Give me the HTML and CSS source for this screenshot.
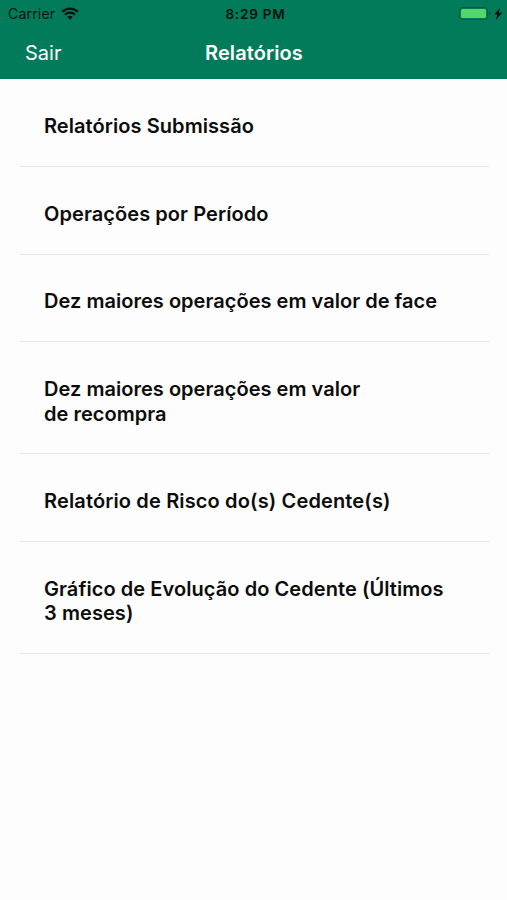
FILE: index.html
```html
<!DOCTYPE html>
<html lang="pt-BR">
<head>
<meta charset="UTF-8">
<meta name="viewport" content="width=device-width, initial-scale=1.0">
<title>Relatórios</title>
<link rel="stylesheet" href="styles.css">
</head>
<body>
  <header class="header">
    <div class="status">
      <div class="carrier">
        <span>Carrier</span>
        <svg class="wifi" width="18" height="13" viewBox="0 0 18 13">
          <path d="M1.2 4.9a11 11 0 0 1 15.6 0M4 7.8a7 7 0 0 1 10 0" fill="none" stroke="#06120d" stroke-width="2.2"/>
          <path d="M9 12.8l-2.7-2.7a3.9 3.9 0 0 1 5.4 0z" fill="#06120d"/>
        </svg>
      </div>
      <span class="time">8:29 PM</span>
      <div class="power">
        <svg width="44" height="14" viewBox="0 0 44 14">
          <rect x="0.5" y="0.5" width="28" height="12" rx="3" fill="none" stroke="#0b5841" stroke-width="1"/>
          <rect x="2" y="2" width="25" height="9" rx="1.5" fill="#53d769"/>
          <path d="M30 4.5v4q1.6-.6 1.6-2t-1.6-2z" fill="#0b5841"/>
          <path d="M41 .8l-5.700 6.700h3l-1.400 5.300 6.300-7h-3.400z" fill="#06120d"/>
        </svg>
      </div>
    </div>
    <nav class="navbar">
      <a class="exit">Sair</a>
      <h1 class="title">Relatórios</h1>
    </nav>
  </header>
  <ul class="reports">
    <li>Relatórios Submissão</li>
    <li>Operações por Período</li>
    <li class="tight">Dez maiores operações em valor de face</li>
    <li class="tight">Dez maiores operações em valor<br>de recompra</li>
    <li class="wide">Relatório de Risco do(s) Cedente(s)</li>
    <li>Gráfico de Evolução do Cedente (Últimos<br>3 meses)</li>
  </ul>
</body>
</html>
```
FILE: styles.css
```css
* {
  box-sizing: border-box;
}
body {
  margin: 0;
  min-height: 900px;
  background-color: #fdfdfd;
  font-family: Inter, "Liberation Sans", sans-serif;
  color: #0c0c0c;
}

/* Green top area */
.header {
  height: 79px;
  background-color: #027b5b;
}
.status {
  display: grid;
  grid-template-columns: 1fr auto 1fr;
  align-items: center;
  height: 27px;
  padding: 0 4px 0 8px;
  font-size: 14px;
  color: #06120d;
}
.carrier {
  display: flex;
  align-items: center;
  gap: 6px;
  letter-spacing: 0.2px;
}
.time {
  font-size: 13.5px;
  font-weight: 600;
  letter-spacing: 0.8px;
}
.power {
  display: flex;
  justify-content: flex-end;
}
.navbar {
  display: grid;
  grid-template-columns: 1fr auto 1fr;
  align-items: center;
  height: 51px;
  padding: 0 24px 0 25px;
  color: #fff;
}
.exit {
  font-size: 20px;
}
.title {
  margin: 0;
  font-size: 20px;
  font-weight: 600;
  letter-spacing: 0.1px;
}

/* Report list */
.reports {
  margin: 0 18px 0 20px;
  padding: 0.4px 0 0;
  list-style: none;
}
.reports li {
  padding: 34.8px 24px 27.2px;
  border-bottom: 1px solid #e6e6e6;
  font-size: 20px;
  font-weight: 600;
  letter-spacing: 0.07px;
  line-height: 24.6px;
  white-space: nowrap;
}
.reports .tight {
  letter-spacing: 0.03px;
}
.reports .wide {
  letter-spacing: 0.14px;
}
```
